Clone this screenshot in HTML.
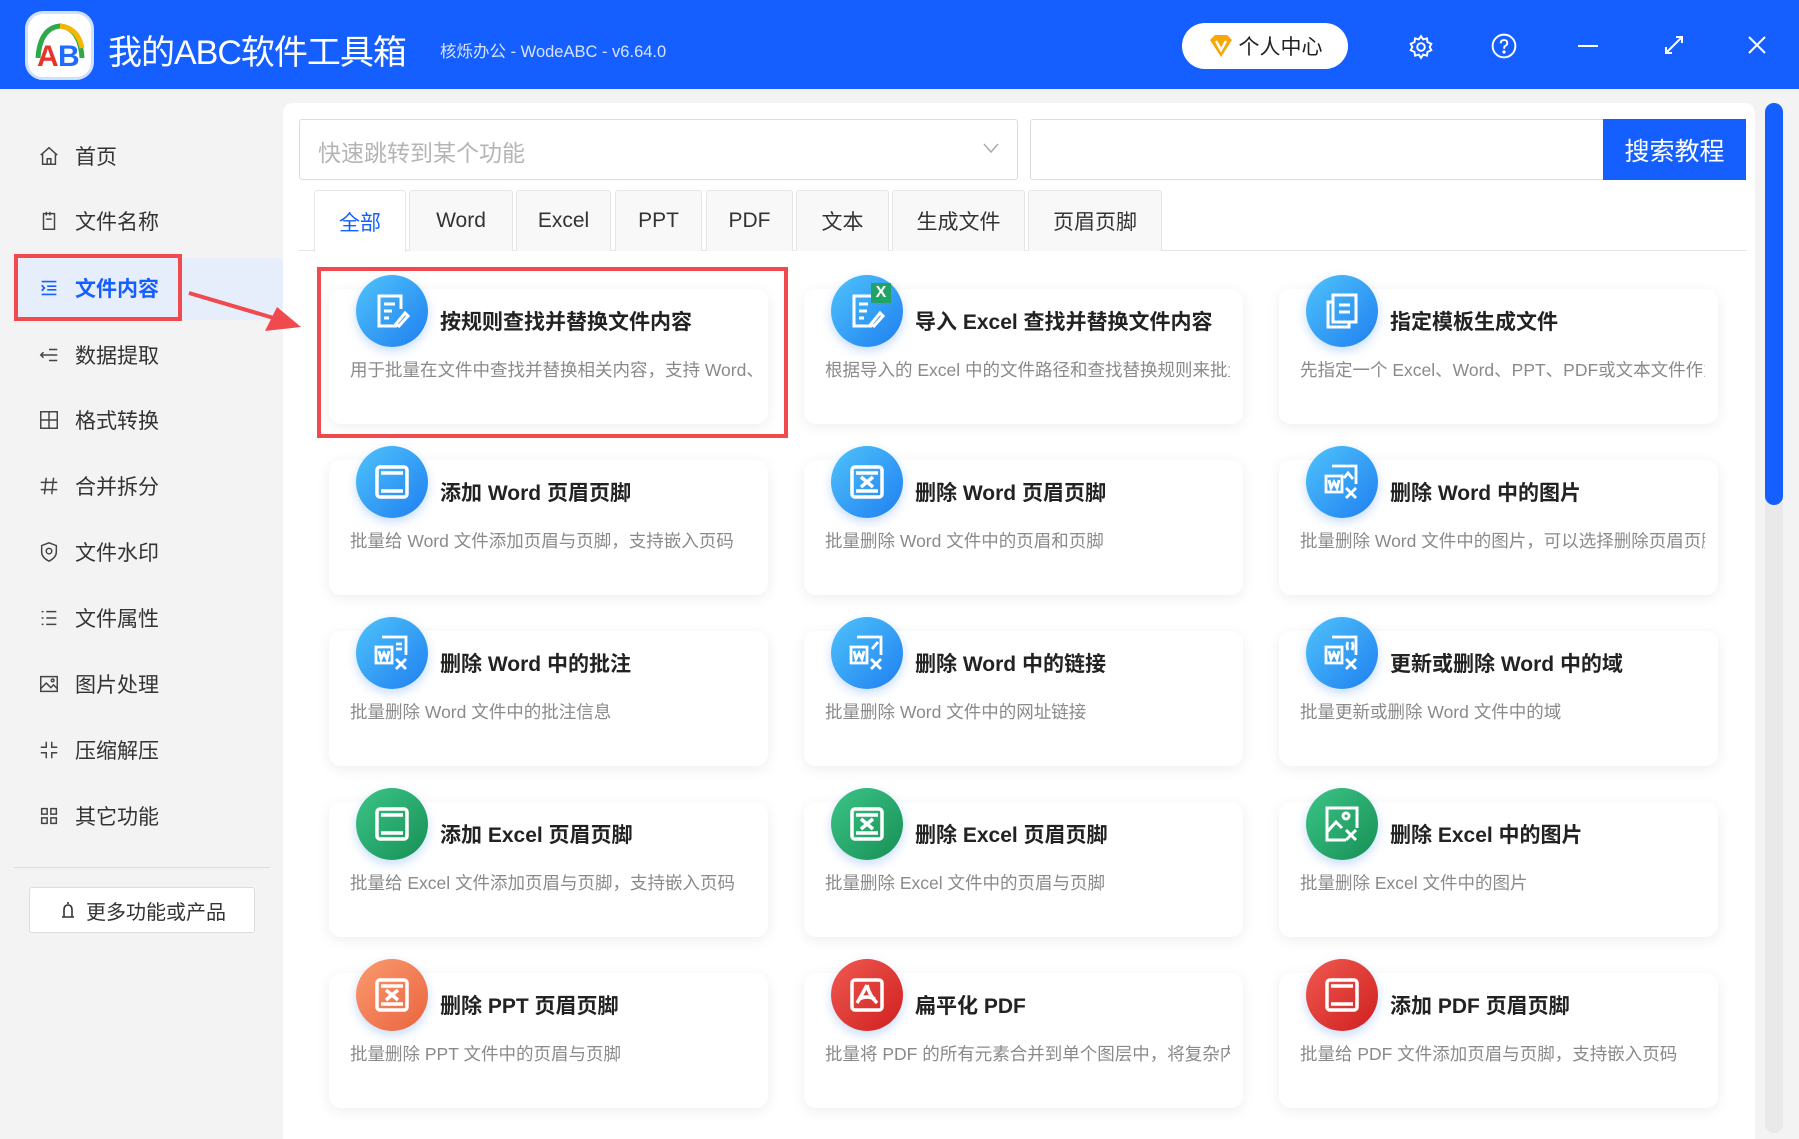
<!DOCTYPE html>
<html><head><meta charset="utf-8">
<style>
*{margin:0;padding:0;box-sizing:border-box}
body{width:1799px;height:1139px;overflow:hidden;background:#f3f3f3;font-family:"Liberation Sans","Noto Sans CJK SC",sans-serif;position:relative}
.abs{position:absolute}
#hdr{left:0;top:0;width:1799px;height:89px;background:#155eff}
.side{left:0;top:89px;width:283px;height:1050px;background:#f3f3f3}
.si{position:absolute;left:38px;height:30px;font-size:21px;color:#333;display:flex;align-items:center}
.si svg{width:22px;height:22px;margin-right:15px}
.panel{left:283px;top:103px;width:1472px;height:1036px;background:#fff;border-radius:10px 10px 0 0}
.tab{position:absolute;top:190px;height:61px;border:1px solid #e6e6e6;border-bottom:none;background:#f8f8f8;font-size:21px;color:#333;display:flex;align-items:center;justify-content:center;border-radius:3px 3px 0 0}
.card{position:absolute;width:439px;height:135px;background:#fff;border-radius:12px;box-shadow:0 3px 14px rgba(0,0,0,0.07)}
.ic{position:absolute;left:27px;top:-14px;width:72px;height:72px;border-radius:50%;box-shadow:0 4px 10px rgba(30,120,240,.25)}
.ic svg{position:absolute;left:16px;top:16px;width:40px;height:40px}
.b{background:linear-gradient(135deg,#4fc3fb,#1f7ff0)}
.g{background:linear-gradient(135deg,#3cc587,#178f55)}
.o{background:linear-gradient(135deg,#fb9a6f,#e9643e)}
.r{background:linear-gradient(135deg,#f05a50,#cf1f1f)}
.t{position:absolute;left:111px;top:17px;font-size:21px;font-weight:bold;color:#222;white-space:nowrap}
.d{position:absolute;left:21px;top:68px;width:405px;overflow:hidden;font-size:17.5px;color:#8a8a8a;white-space:nowrap}
</style></head><body>
<div id="hdr" class="abs"></div>
<div class="abs" style="left:25px;top:11px;width:69px;height:69px;border-radius:18px;background:#fff;border:3px solid #cfe0ff"></div>
<svg class="abs" style="left:30px;top:18px" width="60" height="55" viewBox="0 0 60 55"><path d="M8 40 Q10 10 30 8 Q50 10 52 40" fill="none" stroke="#2ea84a" stroke-width="5"/><path d="M30 8 Q48 10 52 30" fill="none" stroke="#f7b500" stroke-width="5"/><text x="7" y="48" font-family="Liberation Sans" font-weight="bold" font-size="30" fill="#e8332b">A</text><text x="28" y="48" font-family="Liberation Sans" font-weight="bold" font-size="30" fill="#1d6bff">B</text></svg>
<div class="abs" style="left:108px;top:25px;font-size:34px;color:#fff;white-space:nowrap;letter-spacing:-1px">我的ABC软件工具箱</div>
<div class="abs" style="left:440px;top:38px;font-size:16.5px;color:#d8e4ff;white-space:nowrap">核烁办公 - WodeABC - v6.64.0</div>
<div class="abs" style="left:1182px;top:23px;width:166px;height:46px;border-radius:23px;background:#fff;font-size:21px;color:#222;display:flex;align-items:center;justify-content:center"><svg width="26" height="24" viewBox="0 0 26 24" style="margin-right:5px"><path d="M2 6 L7 1 H19 L24 6 L13 23 Z" fill="#f7a707"/><path d="M8 7 L13 16 L18 7" fill="none" stroke="#fff" stroke-width="2.5"/></svg>个人中心</div>
<svg class="abs" style="left:1408px;top:34px" width="26" height="26" viewBox="0 0 24 24" fill="none" stroke="#fff" stroke-width="1.8"><circle cx="12" cy="12" r="3.5"/><path d="M12 2 L14 5 L17.5 4 L18 7.5 L21.5 9 L20 12 L21.5 15 L18 16.5 L17.5 20 L14 19 L12 22 L10 19 L6.5 20 L6 16.5 L2.5 15 L4 12 L2.5 9 L6 7.5 L6.5 4 L10 5 Z"/></svg>
<svg class="abs" style="left:1491px;top:33px" width="26" height="26" viewBox="0 0 24 24" fill="none" stroke="#fff" stroke-width="1.8"><circle cx="12" cy="12" r="10.5"/><path d="M9 9.5 Q9 6.5 12 6.5 Q15 6.5 15 9.3 Q15 11 12.5 12.3 L12 14.5"/><circle cx="12" cy="17.5" r="0.6" fill="#fff"/></svg>
<div class="abs" style="left:1578px;top:45px;width:20px;height:2px;background:#fff"></div>
<svg class="abs" style="left:1663px;top:34px" width="22" height="22" viewBox="0 0 22 22" fill="none" stroke="#fff" stroke-width="2"><path d="M3 19 L19 3 M13 3 H19 V9 M3 13 V19 H9"/></svg>
<svg class="abs" style="left:1747px;top:35px" width="20" height="20" viewBox="0 0 20 20" stroke="#fff" stroke-width="2"><path d="M2 2 L18 18 M18 2 L2 18"/></svg>

<div class="abs side"></div>
<div class="abs" style="left:14px;top:258px;width:269px;height:62px;background:#e6eefc;border-radius:0 6px 6px 0"></div>
<div class="abs" style="left:14px;top:254px;width:168px;height:67px;border:4px solid #f04a4e"></div>
<div class="si" style="top:141px"><svg viewBox="0 0 24 24" fill="none" stroke="#444" stroke-width="1.6"><path d="M3 11 L12 3 L21 11 M5 9 V21 H19 V9 M10 21 V15 H14 V21"/></svg>首页</div>
<div class="si" style="top:206px"><svg viewBox="0 0 24 24" fill="none" stroke="#444" stroke-width="1.6"><path d="M6 4 H18 V21 H6 Z M9 2 V6 M13 2 V6 M9 10 H15"/></svg>文件名称</div>
<div class="si" style="top:273px;color:#155eff;font-weight:bold"><svg viewBox="0 0 24 24" fill="none" stroke="#155eff" stroke-width="1.8"><path d="M4 5 H20 M10 10 H20 M10 14 H20 M4 19 H20 M4 9 L7 12 L4 15"/></svg>文件内容</div>
<div class="si" style="top:340px"><svg viewBox="0 0 24 24" fill="none" stroke="#444" stroke-width="1.6"><path d="M3 12 H21 M12 6 H21 M12 18 H21 M6 9 L3 12 L6 15"/></svg>数据提取</div>
<div class="si" style="top:405px"><svg viewBox="0 0 24 24" fill="none" stroke="#444" stroke-width="1.6"><path d="M3 3 H21 V21 H3 Z M12 3 V21 M3 12 H21"/></svg>格式转换</div>
<div class="si" style="top:471px"><svg viewBox="0 0 24 24" fill="none" stroke="#444" stroke-width="1.6"><path d="M9 3 L7 21 M17 3 L15 21 M3 8 H21 M3 16 H21"/></svg>合并拆分</div>
<div class="si" style="top:537px"><svg viewBox="0 0 24 24" fill="none" stroke="#444" stroke-width="1.6"><path d="M12 2 L20 5 V12 Q20 18 12 22 Q4 18 4 12 V5 Z"/><circle cx="12" cy="11" r="3"/></svg>文件水印</div>
<div class="si" style="top:603px"><svg viewBox="0 0 24 24" fill="none" stroke="#444" stroke-width="1.6"><path d="M4 5 H6 M9 5 H20 M4 12 H6 M9 12 H20 M4 19 H6 M9 19 H20"/></svg>文件属性</div>
<div class="si" style="top:669px"><svg viewBox="0 0 24 24" fill="none" stroke="#444" stroke-width="1.6"><path d="M3 4 H21 V20 H3 Z M3 17 L9 11 L14 16 L17 13 L21 17"/><circle cx="16" cy="8" r="1.5"/></svg>图片处理</div>
<div class="si" style="top:735px"><svg viewBox="0 0 24 24" fill="none" stroke="#444" stroke-width="1.6"><path d="M9 3 V9 H3 M15 3 V9 H21 M9 21 V15 H3 M15 21 V15 H21"/></svg>压缩解压</div>
<div class="si" style="top:801px"><svg viewBox="0 0 24 24" fill="none" stroke="#444" stroke-width="1.6"><path d="M4 4 H10 V10 H4 Z M14 4 H20 V10 H14 Z M4 14 H10 V20 H4 Z M14 14 H20 V20 H14 Z"/></svg>其它功能</div>
<div class="abs" style="left:14px;top:867px;width:256px;height:1px;background:#ddd"></div>
<div class="abs" style="left:29px;top:887px;width:226px;height:46px;background:#fff;border:1px solid #ddd;border-radius:3px;font-size:20px;color:#333;display:flex;align-items:center;justify-content:center"><svg width="20" height="20" viewBox="0 0 20 20" fill="none" stroke="#333" stroke-width="1.6" style="margin-right:8px"><path d="M4 17 H16 M6 17 V10 Q6 5 10 5 Q14 5 14 10 V17 M10 2 V4"/></svg>更多功能或产品</div>

<div class="abs panel"></div>
<div class="abs" style="left:1765px;top:103px;width:18px;height:1030px;background:#e9e9e9;border-radius:9px"></div>
<div class="abs" style="left:1765px;top:103px;width:18px;height:402px;background:#155eff;border-radius:9px"></div>
<div class="abs" style="left:299px;top:119px;width:719px;height:61px;border:1px solid #dcdcdc;border-radius:3px;font-size:23px;color:#b5b5b5;padding:14px 18px">快速跳转到某个功能</div>
<svg class="abs" style="left:983px;top:142px" width="16" height="12" viewBox="0 0 16 12" fill="none" stroke="#aaa" stroke-width="1.5"><path d="M1 2 L8 10 L15 2"/></svg>
<div class="abs" style="left:1030px;top:119px;width:580px;height:61px;border:1px solid #dcdcdc;border-radius:3px"></div>
<div class="abs" style="left:1603px;top:119px;width:143px;height:61px;background:#155eff;color:#fff;font-size:25px;display:flex;align-items:center;justify-content:center">搜索教程</div>
<div class="abs" style="left:299px;top:250px;width:1448px;height:1px;background:#e6e6e6"></div>
<div class="tab" style="left:314px;width:92px;background:#fff;color:#155eff;height:62px">全部</div>
<div class="tab" style="left:409px;width:104px">Word</div>
<div class="tab" style="left:516px;width:95px">Excel</div>
<div class="tab" style="left:615px;width:87px">PPT</div>
<div class="tab" style="left:706px;width:87px">PDF</div>
<div class="tab" style="left:796px;width:93px">文本</div>
<div class="tab" style="left:892px;width:133px">生成文件</div>
<div class="tab" style="left:1028px;width:134px">页眉页脚</div>

<div class="card" style="left:329px;top:289px"><div class="ic b"><svg viewBox="0 0 40 40" fill="none" stroke="#fff" stroke-width="3"><path d="M25 35 H7 V5 H29 V18 M12 13 H23 M12 20 H20 M12 27 H17 M24 33 L33 22 L36 25 L27 35 Z"/></svg></div><div class="t">按规则查找并替换文件内容</div><div class="d">用于批量在文件中查找并替换相关内容，支持 Word、Excel</div></div>
<div class="card" style="left:804px;top:289px"><div class="ic b"><svg viewBox="0 0 40 40" fill="none" stroke="#fff" stroke-width="3"><path d="M25 35 H7 V5 H24 M12 13 H21 M12 20 H20 M12 27 H17 M24 33 L33 22 L36 25 L27 35 Z"/></svg><div style="position:absolute;left:40px;top:8px;width:20px;height:20px;background:#21a366;color:#fff;font-size:16px;font-weight:bold;text-align:center;line-height:20px">X</div></div><div class="t">导入 Excel 查找并替换文件内容</div><div class="d">根据导入的 Excel 中的文件路径和查找替换规则来批量处理</div></div>
<div class="card" style="left:1279px;top:289px"><div class="ic b"><svg viewBox="0 0 40 40" fill="none" stroke="#fff" stroke-width="3"><path d="M10 11 H6 V36 H27 V32 M11 4 H34 V31 H11 Z M17 14 H28 M17 21 H28"/></svg></div><div class="t">指定模板生成文件</div><div class="d">先指定一个 Excel、Word、PPT、PDF或文本文件作为模板</div></div>
<div class="card" style="left:329px;top:460px"><div class="ic b"><svg viewBox="0 0 40 40" fill="none" stroke="#fff" stroke-width="3.5"><rect x="5" y="5" width="30" height="30" rx="3"/><path d="M9 11 H31 M9 29 H31"/></svg></div><div class="t">添加 Word 页眉页脚</div><div class="d">批量给 Word 文件添加页眉与页脚，支持嵌入页码</div></div>
<div class="card" style="left:804px;top:460px"><div class="ic b"><svg viewBox="0 0 40 40" fill="none" stroke="#fff" stroke-width="3.5"><rect x="5" y="5" width="30" height="30" rx="3"/><path d="M9 11 H31 M9 29 H31 M14 15 L26 25 M26 15 L14 25"/></svg></div><div class="t">删除 Word 页眉页脚</div><div class="d">批量删除 Word 文件中的页眉和页脚</div></div>
<div class="card" style="left:1279px;top:460px"><div class="ic b"><svg viewBox="0 0 40 40" fill="none" stroke="#fff" stroke-width="2.8"><path d="M10 4 H34 V22 M4 14 H20 V30 H4 Z M7 18 L9 26 L12 20 L15 26 L17 18 M24 26 L34 36 M34 26 L24 36 M22 16 L26 11 L31 17"/></svg></div><div class="t">删除 Word 中的图片</div><div class="d">批量删除 Word 文件中的图片，可以选择删除页眉页脚中的图片</div></div>
<div class="card" style="left:329px;top:631px"><div class="ic b"><svg viewBox="0 0 40 40" fill="none" stroke="#fff" stroke-width="2.8"><path d="M10 4 H34 V22 M4 14 H20 V30 H4 Z M7 18 L9 26 L12 20 L15 26 L17 18 M24 26 L34 36 M34 26 L24 36 M24 11 H30 M24 16 H30"/></svg></div><div class="t">删除 Word 中的批注</div><div class="d">批量删除 Word 文件中的批注信息</div></div>
<div class="card" style="left:804px;top:631px"><div class="ic b"><svg viewBox="0 0 40 40" fill="none" stroke="#fff" stroke-width="2.8"><path d="M10 4 H34 V22 M4 14 H20 V30 H4 Z M7 18 L9 26 L12 20 L15 26 L17 18 M24 26 L34 36 M34 26 L24 36 M25 16 L31 9"/></svg></div><div class="t">删除 Word 中的链接</div><div class="d">批量删除 Word 文件中的网址链接</div></div>
<div class="card" style="left:1279px;top:631px"><div class="ic b"><svg viewBox="0 0 40 40" fill="none" stroke="#fff" stroke-width="2.8"><path d="M10 4 H34 V22 M4 14 H20 V30 H4 Z M7 18 L9 26 L12 20 L15 26 L17 18 M24 26 L34 36 M34 26 L24 36 M26 9 Q24 13 26 17 M30 9 Q32 13 30 17"/></svg></div><div class="t">更新或删除 Word 中的域</div><div class="d">批量更新或删除 Word 文件中的域</div></div>
<div class="card" style="left:329px;top:802px"><div class="ic g"><svg viewBox="0 0 40 40" fill="none" stroke="#fff" stroke-width="3.5"><rect x="5" y="5" width="30" height="30" rx="3"/><path d="M9 11 H31 M9 29 H31"/></svg></div><div class="t">添加 Excel 页眉页脚</div><div class="d">批量给 Excel 文件添加页眉与页脚，支持嵌入页码</div></div>
<div class="card" style="left:804px;top:802px"><div class="ic g"><svg viewBox="0 0 40 40" fill="none" stroke="#fff" stroke-width="3.5"><rect x="5" y="5" width="30" height="30" rx="3"/><path d="M9 11 H31 M9 29 H31 M14 15 L26 25 M26 15 L14 25"/></svg></div><div class="t">删除 Excel 页眉页脚</div><div class="d">批量删除 Excel 文件中的页眉与页脚</div></div>
<div class="card" style="left:1279px;top:802px"><div class="ic g"><svg viewBox="0 0 40 40" fill="none" stroke="#fff" stroke-width="3"><path d="M24 36 H5 V4 H35 V24 M5 28 L14 18 L20 24 M24 26 L34 36 M34 26 L24 36"/><circle cx="24" cy="12" r="3"/></svg></div><div class="t">删除 Excel 中的图片</div><div class="d">批量删除 Excel 文件中的图片</div></div>
<div class="card" style="left:329px;top:973px"><div class="ic o"><svg viewBox="0 0 40 40" fill="none" stroke="#fff" stroke-width="3.5"><rect x="5" y="5" width="30" height="30" rx="3"/><path d="M9 11 H31 M9 29 H31 M14 15 L26 25 M26 15 L14 25"/></svg></div><div class="t">删除 PPT 页眉页脚</div><div class="d">批量删除 PPT 文件中的页眉与页脚</div></div>
<div class="card" style="left:804px;top:973px"><div class="ic r"><svg viewBox="0 0 40 40" fill="none" stroke="#fff" stroke-width="3.5"><rect x="5" y="5" width="30" height="30" rx="3"/><path d="M20 10 Q16 18 10 28 M20 10 Q22 20 30 28 M12 24 Q20 20 28 24"/></svg></div><div class="t">扁平化 PDF</div><div class="d">批量将 PDF 的所有元素合并到单个图层中，将复杂内容扁平化</div></div>
<div class="card" style="left:1279px;top:973px"><div class="ic r"><svg viewBox="0 0 40 40" fill="none" stroke="#fff" stroke-width="3.5"><rect x="5" y="5" width="30" height="30" rx="3"/><path d="M9 11 H31 M9 29 H31"/></svg></div><div class="t">添加 PDF 页眉页脚</div><div class="d">批量给 PDF 文件添加页眉与页脚，支持嵌入页码</div></div>

<div class="abs" style="left:317px;top:267px;width:471px;height:171px;border:4px solid #f04a4e"></div>
<svg class="abs" style="left:185px;top:285px" width="120" height="50" viewBox="0 0 120 50"><path d="M4 8 L92 34" stroke="#f04a4e" stroke-width="4"/><path d="M116 42 L80 46 L92 22 Z" fill="#f04a4e"/></svg>
</body></html>
